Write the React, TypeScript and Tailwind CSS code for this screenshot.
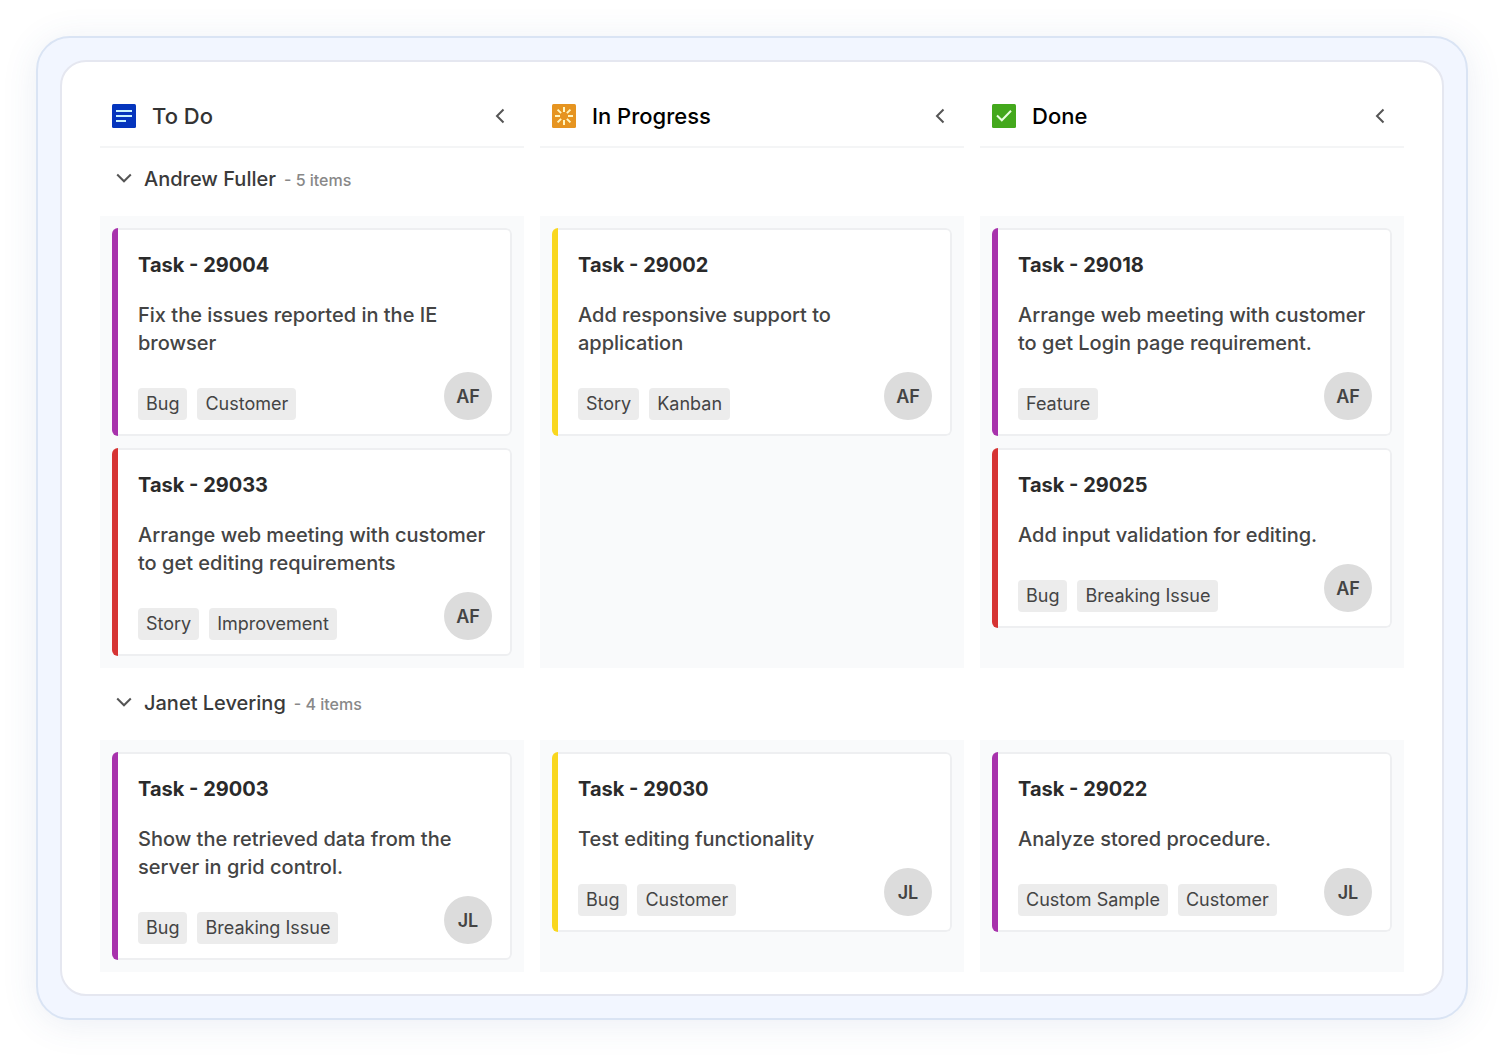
import React, { useState } from 'react';

type Task = {
  id: string;
  text: string;
  tags: string[];
  accent: string;
};

type Lane = {
  name: string;
  initials: string;
  count: number;
  cells: Task[][];
};

const PURPLE = 'bg-[#a832ac]';
const RED = 'bg-[#d63434]';
const YELLOW = 'bg-[#f9d71f]';

const lanes: Lane[] = [
  {
    name: 'Andrew Fuller',
    initials: 'AF',
    count: 5,
    cells: [
      [
        { id: 'Task - 29004', text: 'Fix the issues reported in the IE browser', tags: ['Bug', 'Customer'], accent: PURPLE },
        { id: 'Task - 29033', text: 'Arrange web meeting with customer to get editing requirements', tags: ['Story', 'Improvement'], accent: RED },
      ],
      [
        { id: 'Task - 29002', text: 'Add responsive support to application', tags: ['Story', 'Kanban'], accent: YELLOW },
      ],
      [
        { id: 'Task - 29018', text: 'Arrange web meeting with customer to get Login page requirement.', tags: ['Feature'], accent: PURPLE },
        { id: 'Task - 29025', text: 'Add input validation for editing.', tags: ['Bug', 'Breaking Issue'], accent: RED },
      ],
    ],
  },
  {
    name: 'Janet Levering',
    initials: 'JL',
    count: 4,
    cells: [
      [
        { id: 'Task - 29003', text: 'Show the retrieved data from the server in grid control.', tags: ['Bug', 'Breaking Issue'], accent: PURPLE },
      ],
      [
        { id: 'Task - 29030', text: 'Test editing functionality', tags: ['Bug', 'Customer'], accent: YELLOW },
      ],
      [
        { id: 'Task - 29022', text: 'Analyze stored procedure.', tags: ['Custom Sample', 'Customer'], accent: PURPLE },
      ],
    ],
  },
];

function TodoIcon() {
  return (
    <svg width="24" height="24" viewBox="0 0 24 24" aria-hidden="true">
      <rect width="24" height="24" rx="1.5" fill="#0535bd" />
      <path d="M4 7h16M4 12h16M4 17h10" stroke="#c9f3ff" strokeWidth="2" fill="none" />
    </svg>
  );
}

function ProgressIcon() {
  return (
    <svg width="24" height="24" viewBox="0 0 24 24" aria-hidden="true">
      <rect width="24" height="24" rx="1.5" fill="#e69420" />
      <path
        d="M12 3v5M12 16v5M3 12h5M16 12h5M5.6 5.6l3.5 3.5M14.9 14.9l3.5 3.5M18.4 5.6l-3.5 3.5M9.1 14.9l-3.5 3.5"
        stroke="#fff6c0"
        strokeWidth="2"
        fill="none"
      />
    </svg>
  );
}

function DoneIcon() {
  return (
    <svg width="24" height="24" viewBox="0 0 24 24" aria-hidden="true">
      <rect width="24" height="24" rx="1.5" fill="#43a81c" />
      <path d="M5 11.5l4.8 4.8L19 6.8" stroke="#e9ffe0" strokeWidth="2" fill="none" />
    </svg>
  );
}

const columns = [
  { title: 'To Do', color: 'text-[#333333]', icon: <TodoIcon /> },
  { title: 'In Progress', color: 'text-black', icon: <ProgressIcon /> },
  { title: 'Done', color: 'text-black', icon: <DoneIcon /> },
];

function TaskCard({ task, initials }: { task: Task; initials: string }) {
  return (
    <article className="flex overflow-hidden rounded-md">
      <div className={`w-[6px] shrink-0 ${task.accent}`} />
      <div className="min-w-0 flex-1 rounded-r-md border-2 border-l-0 border-[#eeeff1] bg-white pt-[21px] pr-[18px] pb-[14px] pl-5">
        <h3 className="text-[20px] leading-7 font-bold text-[#2a2a2a]">{task.id}</h3>
        <p className="mt-[22px] text-[20px] leading-7 font-medium text-[#444444]">{task.text}</p>
        <div className="mt-[15px] flex items-end justify-between">
          <ul className="flex gap-[10px]">
            {task.tags.map((tag) => (
              <li key={tag} className="rounded bg-[#ececec] px-2 text-[18px] leading-8 text-[#444444]">
                {tag}
              </li>
            ))}
          </ul>
          <div className="flex size-12 shrink-0 items-center justify-center rounded-full bg-[#dcdcdc] text-[18px] font-semibold text-[#444444]">
            {initials}
          </div>
        </div>
      </div>
    </article>
  );
}

export default function App() {
  const [closedLanes, setClosedLanes] = useState<string[]>([]);
  const [closedColumns, setClosedColumns] = useState<string[]>([]);

  const toggle = (list: string[], name: string) =>
    list.includes(name) ? list.filter((n) => n !== name) : [...list, name];

  return (
    <div className="min-h-screen bg-white p-9 font-['Inter',sans-serif]">
      <div className="rounded-[34px] border-2 border-[#dae4f4] bg-[#f2f6ff] p-[22px] shadow-[0_4px_36px_rgba(60,90,150,0.10)]">
        <main className="rounded-[26px] border-2 border-[#e5e7f0] bg-white px-[38px] pb-[22px]">
          <header className="grid grid-cols-3 gap-4">
            {columns.map((column) => (
              <div key={column.title} className="flex h-[86px] items-center border-b-2 border-[#f4f5f6] px-3 pt-6">
                {column.icon}
                <h2 className={`ml-4 text-[22px] leading-8 font-medium ${column.color}`}>{column.title}</h2>
                <button
                  type="button"
                  aria-label={`Collapse ${column.title}`}
                  className="ml-auto flex size-6 items-center justify-center text-[#555555]"
                  onClick={() => setClosedColumns(toggle(closedColumns, column.title))}
                >
                  <svg width="24" height="24" viewBox="0 0 24 24" fill="none" stroke="currentColor" strokeWidth="2" aria-hidden="true">
                    <path d="M15.5 5.5L9 12l6.5 6.5" />
                  </svg>
                </button>
              </div>
            ))}
          </header>

          <div className="flex flex-col gap-1">
            {lanes.map((lane) => {
              const closed = closedLanes.includes(lane.name);
              return (
                <section key={lane.name}>
                  <div className="flex h-[68px] items-center px-3 pb-1.5">
                    <button
                      type="button"
                      aria-expanded={!closed}
                      className="flex items-center"
                      onClick={() => setClosedLanes(toggle(closedLanes, lane.name))}
                    >
                      <svg
                        className={closed ? '-rotate-90' : ''}
                        width="24"
                        height="24"
                        viewBox="0 0 24 24"
                        fill="none"
                        stroke="#555555"
                        strokeWidth="2"
                        aria-hidden="true"
                      >
                        <path d="M5.2 7.5l6.8 6.8L18.8 7.5" />
                      </svg>
                      <span className="flex items-baseline">
                        <span className="ml-2 text-[20px] leading-7 font-medium text-[#3a3a3a]">{lane.name}</span>
                        <span className="ml-2 text-[16px] font-medium text-[#888888]">- {lane.count} items</span>
                      </span>
                    </button>
                  </div>
                  {!closed && (
                    <div className="grid grid-cols-3 gap-4">
                      {lane.cells.map((tasks, index) => (
                        <div key={columns[index].title} className="flex flex-col gap-3 bg-[#f9fafb] p-3">
                          {!closedColumns.includes(columns[index].title) &&
                            tasks.map((task) => <TaskCard key={task.id} task={task} initials={lane.initials} />)}
                        </div>
                      ))}
                    </div>
                  )}
                </section>
              );
            })}
          </div>
        </main>
      </div>
    </div>
  );
}
